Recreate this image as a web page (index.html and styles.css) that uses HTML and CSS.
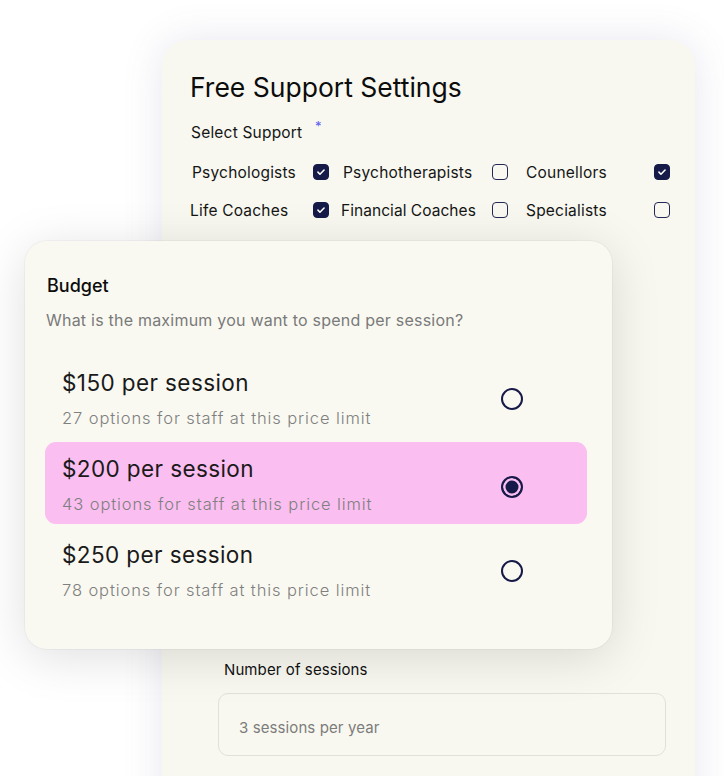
FILE: index.html
```html
<!DOCTYPE html>
<html lang="en">
<head>
    <meta charset="UTF-8">
    <meta name="viewport" content="width=device-width, initial-scale=1.0">
    <title>Free Support Settings</title>
    <link rel="stylesheet" href="styles.css">
</head>
<body>
    <div class="stage">
        <div class="settings-card">
            <h1>Free Support Settings</h1>
            <div class="field-label">Select Support <span class="required">*</span></div>
            <div class="support-grid">
                <label class="support-item">Psychologists <span class="check on"><svg viewBox="0 0 16 16"><path d="M4.5 8.2l2.3 2.3 4.7-4.8"/></svg></span></label>
                <label class="support-item">Psychotherapists <span class="check"></span></label>
                <label class="support-item">Counellors <span class="check on"><svg viewBox="0 0 16 16"><path d="M4.5 8.2l2.3 2.3 4.7-4.8"/></svg></span></label>
                <label class="support-item">Life Coaches <span class="check on"><svg viewBox="0 0 16 16"><path d="M4.5 8.2l2.3 2.3 4.7-4.8"/></svg></span></label>
                <label class="support-item">Financial Coaches <span class="check"></span></label>
                <label class="support-item">Specialists <span class="check"></span></label>
            </div>

            <div class="sessions">
                <div class="sessions-label">Number of sessions</div>
                <div class="sessions-input">3 sessions per year</div>
            </div>
        </div>

        <div class="budget-card">
            <h2>Budget</h2>
            <p class="budget-hint">What is the maximum you want to spend per session?</p>
            <div class="options">
                <div class="option">
                    <div class="option-text">
                        <div class="option-price">$150 per session</div>
                        <div class="option-note">27 options for staff at this price limit</div>
                    </div>
                    <span class="radio"></span>
                </div>
                <div class="option selected">
                    <div class="option-text">
                        <div class="option-price">$200 per session</div>
                        <div class="option-note">43 options for staff at this price limit</div>
                    </div>
                    <span class="radio"></span>
                </div>
                <div class="option">
                    <div class="option-text">
                        <div class="option-price">$250 per session</div>
                        <div class="option-note">78 options for staff at this price limit</div>
                    </div>
                    <span class="radio"></span>
                </div>
            </div>
        </div>
    </div>
</body>
</html>
```

FILE: styles.css
```css
body {
    margin: 0;
    background-color: #ffffff;
    font-family: 'Inter', 'Liberation Sans', sans-serif;
    color: #111111;
}
.stage {
    position: relative;
    width: 724px;
    height: 776px;
    overflow: hidden;
    padding-top: 40px;
    box-sizing: border-box;
}
.settings-card {
    margin-left: 162px;
    width: 533px;
    min-height: 800px;
    box-sizing: border-box;
    padding: 30px 25px 0 28px;
    background-color: #f8f8f0;
    border-radius: 26px;
    box-shadow: 0 0 40px rgba(90, 90, 150, 0.14);
}
h1 {
    margin: 0;
    font-size: 26.5px;
    line-height: 34px;
    font-weight: 400;
    color: #0c0c0c;
}
.field-label {
    margin-top: 19px;
    margin-left: 1px;
    font-size: 15.5px;
    line-height: 20px;
    letter-spacing: 0.2px;
    color: #151515;
}
.required {
    position: relative;
    top: -7px;
    margin-left: 8px;
    font-size: 13px;
    color: #5b5cf2;
}
.support-grid {
    display: grid;
    grid-template-columns: 153px 183px 144px;
    row-gap: 18px;
    margin-top: 19px;
}
.support-item {
    display: flex;
    align-items: center;
    justify-content: space-between;
    height: 20px;
    font-size: 15.5px;
    letter-spacing: 0.2px;
    color: #151515;
}
.support-item:nth-child(3n+1) {
    padding-right: 14px;
    padding-left: 2px;
}
.support-item:nth-child(3n+2) {
    padding-right: 18px;
}
.support-item:nth-child(4) {
    padding-left: 0;
}
.support-item:nth-child(5) {
    margin-left: -2px;
    letter-spacing: 0.05px;
}
.check {
    width: 16px;
    height: 16px;
    box-sizing: border-box;
    border: 1.5px solid #232856;
    border-radius: 4px;
    flex-shrink: 0;
}
.check.on {
    background-color: #161a48;
    border-color: #161a48;
}
.check svg {
    display: block;
    width: 100%;
    height: 100%;
    fill: none;
    stroke: #ffffff;
    stroke-width: 1.8;
    stroke-linecap: round;
    stroke-linejoin: round;
}
.sessions {
    margin-top: 440px;
    margin-left: 28px;
    width: 448px;
}
.sessions-label {
    margin-left: 6px;
    font-size: 15px;
    line-height: 20px;
    letter-spacing: 0.1px;
    color: #111111;
}
.sessions-input {
    margin-top: 13px;
    height: 63px;
    box-sizing: border-box;
    padding: 6px 0 0 20px;
    display: flex;
    align-items: center;
    border: 1px solid #e1e1dc;
    border-radius: 10px;
    font-size: 15px;
    letter-spacing: 0.1px;
    color: #7c7c7c;
}
.budget-card {
    position: absolute;
    left: 25px;
    top: 241px;
    width: 587px;
    height: 408px;
    box-sizing: border-box;
    padding: 33px 25px 0 20px;
    background-color: #f9f9f1;
    border-radius: 22px;
    box-shadow: 0 8px 50px rgba(0, 0, 0, 0.13), 0 0 0 1px rgba(0, 0, 0, 0.03);
}
h2 {
    margin: 0 0 0 2px;
    font-size: 18px;
    line-height: 24px;
    font-weight: 500;
    color: #0c0c0c;
}
.budget-hint {
    margin: 12px 0 0 1px;
    font-size: 16px;
    line-height: 20px;
    letter-spacing: 0.22px;
    color: #7a7a7a;
}
.options {
    display: flex;
    flex-direction: column;
    gap: 4px;
    margin-top: 26px;
}
.option {
    display: flex;
    align-items: center;
    justify-content: space-between;
    height: 82px;
    box-sizing: border-box;
    padding: 0 64px 0 17px;
    border-radius: 11px;
}
.option.selected {
    background-color: #fbbef0;
}
.option-text {
    margin-top: 4px;
}
.option-price {
    font-size: 22.5px;
    line-height: 28px;
    letter-spacing: 0.4px;
    color: #1a1a1a;
}
.option-note {
    margin-top: 10px;
    font-size: 16.5px;
    line-height: 22px;
    letter-spacing: 0.9px;
    font-weight: 300;
    color: #7f7f7f;
}
.radio {
    width: 22px;
    height: 22px;
    margin-top: 4px;
    box-sizing: border-box;
    border: 2px solid #161a48;
    border-radius: 50%;
    flex-shrink: 0;
}
.option.selected .radio {
    margin-top: 8px;
    background-color: #161a48;
    box-shadow: inset 0 0 0 2.5px #fbbef0;
}
```
